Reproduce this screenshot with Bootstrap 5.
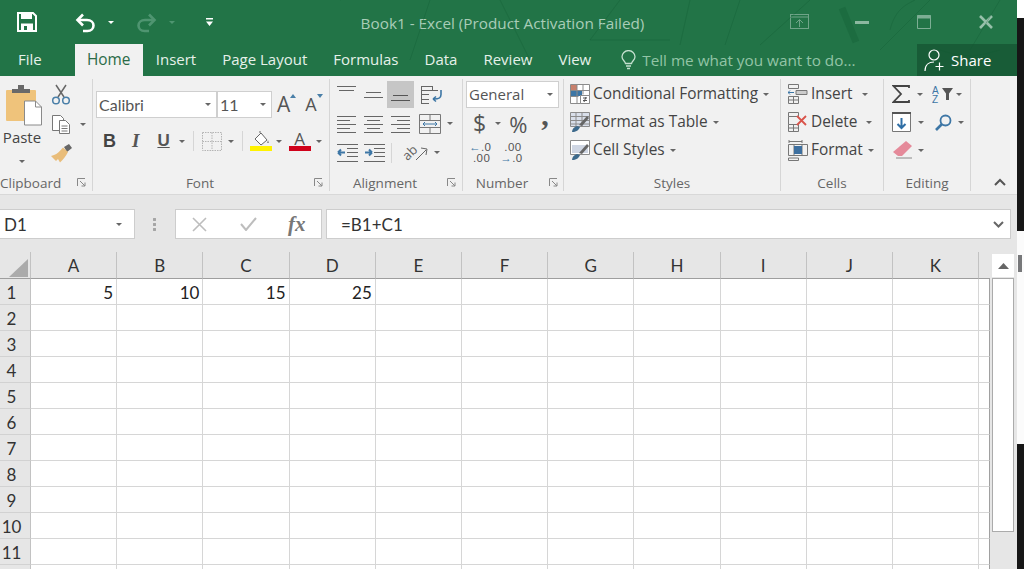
<!DOCTYPE html>
<html lang="en">
<head>
<meta charset="utf-8">
<title>Book1 - Excel</title>
<link href="https://cdn.jsdelivr.net/npm/bootstrap@5.3.0/dist/css/bootstrap.min.css" rel="stylesheet">
<style>
html,body{height:569px;overflow:hidden;margin:0;background:#161616}
body{font-family:"Open Sans","Noto Sans",sans-serif}
.xl-win{width:1017px;height:569px;background:#e6e6e6;overflow:hidden;position:relative;flex:none}
.xl-edge{width:7px;height:569px;background:#161616;flex:none}
.xl-edge-w1{height:18px;background:#fff}
.xl-edge-b1{height:213px}
.xl-edge-w2{height:213px;background:#fbfbfb;padding-top:24px}
.xl-spot{width:4px;height:17px;margin-left:1px;background:#77787a}
.xl-title{height:44px;background:#227447;color:#a9cdb8;font-size:15.3px}
.xl-tabs{height:32px;background:#227447;color:#fff;font-size:15px}
.xl-pattern{position:absolute;left:340px;top:0;pointer-events:none}
.xl-qat{width:215px;padding-left:17px}
.xl-ttl{flex:1;text-align:center;position:relative;top:1px}
.xl-ctl{width:227px}
.xl-tab{padding:0 13px;height:32px;line-height:31px;white-space:nowrap;color:#e6f1ea}
.xl-tab-file{margin-left:5px;margin-right:20px}
.xl-tab-on{background:#f1f1f1;color:#2b6b47;width:68px;padding:0;text-align:center;font-size:15.4px}
.xl-tell{color:#93c4a6;margin-left:17px;flex:1;white-space:nowrap;font-size:15.3px}
.xl-share{width:100px;height:32px;background:#185c37;color:#fff;padding-left:7px;flex:none}
.xl-ribbon{height:119px;background:#f1f1f1;border-bottom:1px solid #d8d8d8;padding-top:3px;color:#444;font-size:15.4px}
.xl-grp{height:112px;border-right:1px solid #d6d6d6;flex:none}
.xl-body{height:95px;flex:none}
.xl-pt1{padding-top:1px}
.xl-lab{height:17px;line-height:19px;font-size:13.5px;color:#666;text-align:center;position:relative}
.xl-lab-l{padding-right:22px}
.xl-launch{position:absolute;right:6px;top:4px}
.xl-launch-n{right:5px}
.w-clip{width:93px}.w-font{width:237px}.w-align{width:133px}.w-num{width:101px}.w-sty{width:217px}.w-cell{width:103px}.w-edit{width:87px}
.xl-paste{width:44px;padding-top:5px;font-size:15px;line-height:20px;text-align:center}
.xl-paste-t{margin-top:1px}
.xl-paste-c{display:block;margin:7px auto 0}
.dn{display:inline-block;width:0;height:0;border-left:3px solid transparent;border-right:3px solid transparent;border-top:3px solid #666;flex:none}
.dn-w{border-top-color:#fff}
.dn-d{border-top-color:#4f9571}
.xl-cr{margin-right:3px}
.xl-combo{background:#fff;border:1px solid #cfcfcf;height:27px;font-size:15.5px;color:#555;padding:0 2px;flex:none}
.xl-cal{font-family:Lato,sans-serif;font-size:16px}
.w121{width:121px}.w55{width:55px}.w93{width:93px}
.xl-gen{font-size:15px;margin:1px 0}
.xl-r28{height:28px}.xl-r29{height:29px}
.xl-hi{background:#c6c6c6;width:27px;height:27px;margin-left:4px}
.xl-sep{width:1px;height:20px;background:#d6d6d6;flex:none}
.ml2{margin-left:2px}.ml3{margin-left:3px}.ml4{margin-left:4px}.ml5{margin-left:5px}.ml6{margin-left:6px}.ml7{margin-left:7px}.ml8{margin-left:8px}.ml9{margin-left:9px}.ml10{margin-left:10px}.ml11{margin-left:11px}.ml12{margin-left:12px}.ml14{margin-left:14px}.ml16{margin-left:16px}.ml18{margin-left:18px}.ml22{margin-left:22px}.ml24{margin-left:24px}.ml31{margin-left:31px}.ml33{margin-left:33px}.ml38{margin-left:38px}.ml45{margin-left:45px}.ml48{margin-left:48px}.mln4{margin-left:-4px}.mln7{margin-left:-7px}
.pl3{padding-left:3px}.pl6{padding-left:6px}.pl7{padding-left:7px}.pl8{padding-left:8px}
.mt12{margin-top:12px}.mt9{margin-top:9px}.mt5{margin-top:5px}.mt1{margin-top:1px}.mtn1{margin-top:-1px}
.xl-txt{white-space:nowrap;margin-left:3px}
.xl-min{width:14px;height:3px;background:#8cb8a0}
.xl-grow{font-size:21px;line-height:21px;color:#555}
.xl-shrink{font-size:18px;line-height:21px;color:#555}
.xl-ab{font-weight:700;font-size:18px;color:#444;font-family:"Liberation Sans",sans-serif;line-height:1}
.xl-it{font:italic 700 19px "Liberation Serif",serif;color:#555}
.xl-un{font-size:17px;line-height:20px;text-decoration:underline;color:#555;font-family:"Liberation Sans",sans-serif;font-weight:700}
.xl-fc{display:flex;flex-direction:column;align-items:center;width:22px;line-height:1}
.xl-fc-a{font-size:17px;line-height:15px;color:#555}
.xl-fc-bar{width:22px;height:5px;background:#d0021b}
.xl-orient{display:inline-block;transform:rotate(-45deg);font-size:13px;line-height:13px;color:#666;width:16px}
.xl-num{font-size:23px;color:#555}
.xl-num>span{line-height:1}
.xl-pc{font-size:22px}
.xl-cm{font:700 30px "Liberation Serif",serif;position:relative;top:-9px}
.xl-dec{font-family:"Liberation Sans",sans-serif;font-size:11.5px;line-height:11px;letter-spacing:.4px;color:#555}
.xl-dec b{color:#3d76a5}
.xl-fbar{height:57px;padding-top:14px;background:#e6e6e6}
.xl-box{height:30px;background:#fff;border:1px solid #cdcdcd;flex:none;font-family:Lato,sans-serif;font-size:17px;color:#333}
.xl-name{width:135px;padding:1px 4px 0;border-left:0}
.xl-fx{width:147px;margin-left:40px;color:#aaa}
.xl-fx-t{font:italic 700 21px "Liberation Serif",serif;color:#777;margin-left:31px;line-height:1}
.xl-input{width:685px;margin-left:4px;padding:1px 6px 0 14px}
.xl-dots{position:absolute;left:153px;top:217px;width:3px;height:15px;background:radial-gradient(circle,#a5a5a5 1.4px,transparent 1.6px) 0 0/3px 5px}
.xl-sheet{border-collapse:separate;border-spacing:0;table-layout:fixed;width:990px;font-family:Lato,sans-serif;font-size:17px;color:#222;flex:none}
.xl-sheet col{width:86.2px}
.xl-sheet col.c-head{width:31px}
.xl-sheet col.c-last{width:10.8px}
.xl-sheet tr{height:26px}
.xl-sheet td{border-right:1px solid #d6d6d6;border-bottom:1px solid #d6d6d6;height:26px;padding:1px 3px 0 0;text-align:right;line-height:1;background:#fff}
.xl-sheet td:last-child{border-right-color:#a0a0a0}
.xl-sheet thead tr{height:27px}
.xl-sheet thead th{height:27px;background:#e6e6e6;font-weight:400;text-align:center;border-right:1px solid #c2c2c2;border-bottom:1px solid #9e9e9e;padding:0;color:#333;line-height:1}
.xl-sheet thead th:last-child{border-right:0}
.xl-sheet tbody th{height:26px;line-height:1;background:#e6e6e6;font-weight:400;text-align:center;border-right:1px solid #c2c2c2;border-bottom:1px solid #d2d2d2;padding:1px 7px 0 0;color:#333}
.xl-tri{margin:6px 0 0 9px}
.xl-scroll{width:27px;flex:none;padding:2px 0 0 2px}
.xl-up{width:22px;height:23px;background:#fff}
.xl-track{width:22px;height:254px;background:#fff;border:1px solid #ababab;margin-top:1px}
.xl-coll{height:112px;padding:0 11px 5px 0}
</style>
</head>
<body class="d-flex">
<div class="xl-win">
  <div class="xl-title d-flex align-items-center">
    <div class="xl-qat d-flex align-items-center">
      <svg width="20" height="20" viewBox="0 0 20 20"><path d="M1 1h15l3 3v15H1z" fill="none" stroke="#fff" stroke-width="2"/><path d="M4 1h11v6H4z" fill="#fff"/><path d="M4 11.500h12V19H4z" fill="#fff"/><path d="M7 14h3v4H7z" fill="#227447"/></svg>
      <svg class="ml38" width="21" height="21" viewBox="0 0 21 21" fill="none" stroke="#fff" stroke-width="2.600"><path d="M8 2.500 2.500 8 8 13.500"/><path d="M3 8h9c4 0 6.500 2.500 6.500 5.500s-2.500 5.500-6 5.500H8"/></svg>
      <span class="dn dn-w ml12"></span>
      <svg class="ml22" width="21" height="21" viewBox="0 0 21 21" fill="none" stroke="#4f9571" stroke-width="2.600"><path d="M13 2.500 18.500 8 13 13.500"/><path d="M18 8H9c-4 0-6.500 2.500-6.500 5.500S5 19 8.500 19H13"/></svg>
      <span class="dn dn-d ml12"></span>
      <svg class="ml31" width="7" height="8" viewBox="0 0 7 8"><path d="M0 0h7v1.500H0zM0 3.500h7L3.500 8z" fill="#fff"/></svg>
    </div>
    <div class="xl-ttl">Book1 - Excel (Product Activation Failed)</div>
    <div class="xl-ctl d-flex align-items-center">
      <svg width="20" height="16" viewBox="0 0 20 16" fill="none" stroke="#6fa488"><rect x=".5" y=".5" width="18" height="14"/><path d="M.5 3h18M9.500 13V6M6 9l3.500-3.500L13 9"/></svg>
      <span class="xl-min ml45"></span>
      <svg class="ml48" width="14" height="14" viewBox="0 0 14 14" fill="none" stroke="#7dae94"><path d="M.5.500h13v13H.5z"/><path d="M0 2h14" stroke-width="3"/></svg>
      <svg class="ml48" width="14" height="14" viewBox="0 0 14 14" fill="none" stroke="#97c0aa" stroke-width="2.600"><path d="M1 1l12 12M13 1 1 13"/></svg>
    </div>
  </div>
  <div class="xl-tabs d-flex">
    <div class="xl-tab xl-tab-file">File</div>
    <div class="xl-tab xl-tab-on">Home</div>
    <div class="xl-tab">Insert</div>
    <div class="xl-tab">Page Layout</div>
    <div class="xl-tab">Formulas</div>
    <div class="xl-tab">Data</div>
    <div class="xl-tab">Review</div>
    <div class="xl-tab">View</div>
    <div class="xl-tell d-flex align-items-center">
      <svg width="15" height="20" viewBox="0 0 15 20" fill="none" stroke="#c4e0cf" stroke-width="1.300"><path d="M4.500 13.500C4 11 1 10 1 6.800a6.500 6.200 0 0 1 13 0c0 3.200-3 4.200-3.500 6.700z"/><path d="M5 16h5M6 18.500h3"/></svg>
      <span class="ml6">Tell me what you want to do...</span>
    </div>
    <div class="xl-share d-flex align-items-center">
      <svg width="22" height="24" viewBox="0 0 22 24" fill="none" stroke="#fff" stroke-width="1.200"><circle cx="10" cy="7" r="5"/><path d="M1 23c0-6 4-9 9-9"/><path d="M15.500 14.500v8M11.500 18.500h8"/></svg>
      <span class="ml5">Share</span>
    </div>
  </div>
  <svg class="xl-pattern" width="677" height="76" viewBox="0 0 677 76" fill="none" stroke="#0f5a33" stroke-opacity=".3"><path d="M-45 60 -20 20M-20 40 0 0M90 0l-20 60M160 0l30 60 -25 10M280 0l-30 40 80 0M350 0l-10 45M400 0l-15 45M470 0l-50 45M590 0 540 50"/><path d="M502 8 516 42" stroke-width="7"/><path d="M660 0l-30 50M550 30c5-20 15-25 25-30M600 50c30 10 40 5 60 0"/></svg>

  <div class="xl-ribbon d-flex">
    <section class="xl-grp w-clip d-flex flex-column">
      <div class="xl-body d-flex">
        <div class="xl-paste">
          <svg class="ms-1 d-block" width="38" height="42" viewBox="0 0 38 42"><rect x="2" y="6" width="30" height="31" rx="1" fill="#efc37b"/><path d="M8 5h6V1h6v4h6v4H8z" fill="#696969"/><path d="M20.500 17h11l6 6v18h-17z" fill="#fff" stroke="#8a8a8a"/><path d="M31.500 17v6h6" fill="none" stroke="#8a8a8a"/></svg>
          <div class="xl-paste-t">Paste</div>
          <span class="dn xl-paste-c"></span>
        </div>
        <div class="ml7">
          <svg class="d-block mt5" width="20" height="21" viewBox="0 0 20 21" fill="none" stroke-width="1.500"><path d="M5 1l8 12M15 1 7 13" stroke="#666"/><circle cx="5" cy="16.500" r="3.300" stroke="#4a7fa8"/><circle cx="15" cy="16.500" r="3.300" stroke="#4a7fa8"/></svg>
          <div class="d-flex align-items-center mt9">
            <svg width="20" height="21" viewBox="0 0 20 21" fill="#fff" stroke="#777"><path d="M1.500 1.500h8l3 3v12h-11z"/><path d="M8.500 6.500h6l4 4v9h-10z"/><path d="M10.500 12h6M10.500 14.500h6M10.500 17h6" fill="none"/></svg>
            <span class="dn ml9"></span>
          </div>
          <svg class="d-block mt9" width="21" height="19" viewBox="0 0 21 19"><path d="M13 3l5-3 3 4-5 4z" fill="#666"/><path d="M12 3.500 17 8c-2 4-5 8-8 10.500L7 15l-2 2-5-5 3-1c3-1 6-4 9-7.500z" fill="#e9bd7a"/></svg>
        </div>
      </div>
      <div class="xl-lab text-start">Clipboard<svg class="xl-launch" width="9" height="9" viewBox="0 0 9 9" fill="none" stroke="#888"><path d="M.5 8V.5H8M3 3l5 5M8 4.500V8H4.500"/></svg></div>
    </section>

    <section class="xl-grp w-font d-flex flex-column">
      <div class="xl-body pl3">
        <div class="d-flex align-items-center mt12">
          <div class="xl-combo xl-cal w121 d-flex align-items-center justify-content-between"><span>Calibri</span><span class="dn xl-cr"></span></div>
          <div class="xl-combo xl-cal w55 d-flex align-items-center justify-content-between"><span>11</span><span class="dn xl-cr"></span></div>
          <div class="d-flex align-items-start ml5"><span class="xl-grow">A</span><svg width="6" height="4" viewBox="0 0 6 4"><path d="M3 0l3 4H0z" fill="#4a7fa8"/></svg></div>
          <div class="d-flex align-items-start ml9"><span class="xl-shrink">A</span><svg width="6" height="4" viewBox="0 0 6 4"><path d="M3 4l3-4H0z" fill="#4a7fa8"/></svg></div>
        </div>
        <div class="d-flex align-items-center mt9 xl-r28">
          <span class="xl-ab ml7">B</span>
          <span class="xl-it ml16">I</span>
          <span class="xl-un ml18">U</span>
          <span class="dn ml9"></span>
          <span class="xl-sep ml8"></span>
          <svg class="ml8" width="20" height="19" viewBox="0 0 20 19" fill="none" stroke="#b5b5b5" stroke-dasharray="1.500 1"><path d="M.5.500h19v18H.5zM10 .5v18M.5 9.500h19"/></svg>
          <span class="dn ml6"></span>
          <span class="xl-sep ml8"></span>
          <svg class="ml6" width="24" height="21" viewBox="0 0 24 21"><path d="M6 8l6-6 6 7-6 5z" fill="#fff" stroke="#666"/><path d="M11 2V0" stroke="#666"/><path d="M19 9l1 3h-2z" fill="#888"/><path d="M1 15h22v5H1z" fill="#fff200"/></svg>
          <span class="dn ml3"></span>
          <div class="xl-fc ml7"><span class="xl-fc-a">A</span><span class="xl-fc-bar"></span></div>
          <span class="dn ml5"></span>
        </div>
      </div>
      <div class="xl-lab xl-lab-l">Font<svg class="xl-launch" width="9" height="9" viewBox="0 0 9 9" fill="none" stroke="#888"><path d="M.5 8V.5H8M3 3l5 5M8 4.500V8H4.500"/></svg></div>
    </section>

    <section class="xl-grp w-align d-flex flex-column">
      <div class="xl-body pl7 mt1">
        <div class="d-flex align-items-center xl-r29">
          <svg class="align-self-start mt5" width="19" height="12" viewBox="0 0 19 12" stroke="#666"><path d="M0 1.500h19M2 5.500h15"/></svg>
          <svg class="ml8" width="19" height="12" viewBox="0 0 19 12" stroke="#666"><path d="M2 3.500h15M0 8.500h19"/></svg>
          <div class="xl-hi d-flex align-items-end justify-content-center pb-1"><svg width="19" height="12" viewBox="0 0 19 12" stroke="#555"><path d="M2 3.500h15M0 8.500h19"/></svg></div>
          <svg class="ml6" width="24" height="20" viewBox="0 0 24 20" fill="none" stroke="#666"><path d="M1 1.500h11M1 5.500h17M1 9.500h8M1 14.500h8M1 18.500h8M1.500 1v18M12.500 1v4"/><path d="M14 14c5 0 7-1 7-4.500M13 14l3-2.500M13 14l3 2.500M21 9.500V5" stroke="#3d76a5" stroke-width="1.600"/></svg>
        </div>
        <div class="d-flex align-items-center xl-r29">
          <svg width="19" height="18" viewBox="0 0 19 18" stroke="#666"><path d="M0 1.500h19M0 5.500h13M0 9.500h19M0 13.500h13M0 17.500h19"/></svg>
          <svg class="ml8" width="19" height="18" viewBox="0 0 19 18" stroke="#666"><path d="M0 1.500h19M3 5.500h13M0 9.500h19M3 13.500h13M0 17.500h19"/></svg>
          <svg class="ml8" width="19" height="18" viewBox="0 0 19 18" stroke="#666"><path d="M0 1.500h19M6 5.500h13M0 9.500h19M6 13.500h13M0 17.500h19"/></svg>
          <svg class="ml9" width="22" height="20" viewBox="0 0 22 20" fill="none" stroke="#777"><path d="M.5.500h21v19H.5zM.5 6.500h21M.5 13.500h21M11 .5v6M11 13.500v6"/><path d="M4 10h14M4 10l2-2M4 10l2 2M18 10l-2-2M18 10l-2 2" stroke="#3d76a5"/></svg>
          <span class="dn ml6"></span>
        </div>
        <div class="d-flex align-items-center xl-r29">
          <svg width="21" height="19" viewBox="0 0 21 19" fill="none" stroke="#666"><path d="M0 1.500h21M10 5.500h11M10 9.500h11M10 13.500h11M0 18.500h21"/><path d="M1 9.500h7M1 9.500l3-3M1 9.500l3 3" stroke="#3d76a5" stroke-width="2"/></svg>
          <svg class="ml6" width="21" height="19" viewBox="0 0 21 19" fill="none" stroke="#666"><path d="M0 1.500h21M10 5.500h11M10 9.500h11M10 13.500h11M0 18.500h21"/><path d="M1 9.500h7M8 9.500 5 6.500M8 9.500l-3 3" stroke="#3d76a5" stroke-width="2"/></svg>
          <span class="xl-sep ml6"></span>
          <span class="xl-orient ml10">ab</span>
          <svg width="16" height="20" class="mln4" viewBox="0 0 16 20"><path d="M2 17l10-10M7 5l6 1-1 6" fill="none" stroke="#666"/></svg>
          <span class="dn ml4"></span>
        </div>
      </div>
      <div class="xl-lab xl-lab-l mtn1">Alignment<svg class="xl-launch" width="9" height="9" viewBox="0 0 9 9" fill="none" stroke="#888"><path d="M.5 8V.5H8M3 3l5 5M8 4.500V8H4.500"/></svg></div>
    </section>

    <section class="xl-grp w-num d-flex flex-column">
      <div class="xl-body pl3 mt1">
        <div class="xl-combo xl-gen w93 d-flex align-items-center justify-content-between"><span>General</span><span class="dn xl-cr"></span></div>
        <div class="d-flex align-items-center xl-r29 xl-num">
          <span class="ml7">$</span>
          <span class="dn ml9"></span>
          <span class="xl-pc ml8">%</span>
          <span class="xl-cm ml14">,</span>
        </div>
        <div class="d-flex align-items-center xl-r29 xl-dec">
          <span class="ml3"><b>←</b>.0<br><span class="ps-1">.00</span></span>
          <span class="ml9"><span class="ps-1">.00</span><br><b>→</b>.0</span>
        </div>
      </div>
      <div class="xl-lab xl-lab-l mtn1">Number<svg class="xl-launch xl-launch-n" width="9" height="9" viewBox="0 0 9 9" fill="none" stroke="#888"><path d="M.5 8V.5H8M3 3l5 5M8 4.500V8H4.500"/></svg></div>
    </section>

    <section class="xl-grp w-sty d-flex flex-column">
      <div class="xl-body pl6 xl-pt1">
        <div class="d-flex align-items-center xl-r28">
          <svg width="20" height="20" viewBox="0 0 20 20" fill="#fff" stroke="#8b8b8b"><path d="M.5.500h19v19H.5z"/><path d="M1 1h6v5H1z" fill="#c8806c" stroke="none"/><path d="M1 7h11v5H1z" fill="#3d76a5" stroke="none"/><path d="M7 .5v19M13 .5v10M.5 6.500h19M.5 12.500h8"/><path d="M10.500 11.500h9v8h-9z"/><path d="M13 14h4M13 16.500h4M16 13l-2 5" fill="none" stroke="#555"/></svg>
          <span class="xl-txt">Conditional Formatting</span><span class="dn ml5"></span>
        </div>
        <div class="d-flex align-items-center xl-r28">
          <svg width="20" height="20" viewBox="0 0 20 20" fill="none" stroke="#8b8b8b"><path d="M.5.500h19v14H.5z" fill="#d9dfea"/><path d="M.5 4.500h19M.5 8.500h19M.5 12h19M6 .5v14M12 .5v14"/><path d="M19 6 12 14l-3-1 8-9z" fill="#666" stroke="none"/><path d="M2 20c0-3 2-5 5-6l3 1c-1 3-4 5-8 5z" fill="#3d6a8c" stroke="none"/></svg>
          <span class="xl-txt">Format as Table</span><span class="dn ml5"></span>
        </div>
        <div class="d-flex align-items-center xl-r28">
          <svg width="20" height="20" viewBox="0 0 20 20" fill="none" stroke="#8b8b8b"><path d="M.5.500h19v14H.5z" fill="#fff"/><path d="M2 5h16v8H2z" fill="#cfd6e3" stroke="none"/><path d="M19 6 12 14l-3-1 8-9z" fill="#666" stroke="none"/><path d="M2 20c0-3 2-5 5-6l3 1c-1 3-4 5-8 5z" fill="#3d6a8c" stroke="none"/></svg>
          <span class="xl-txt">Cell Styles</span><span class="dn ml5"></span>
        </div>
      </div>
      <div class="xl-lab">Styles</div>
    </section>

    <section class="xl-grp w-cell d-flex flex-column">
      <div class="xl-body pl7 xl-pt1">
        <div class="d-flex align-items-center xl-r28">
          <svg width="20" height="20" viewBox="0 0 20 20" fill="none" stroke="#777"><path d="M.5.500h10v4H.5zM.5 12.500h10v7H.5zM5.500 12.500v7M.5 16h10"/><path d="M8 6.500h11v4H8z" fill="#ccc"/><path d="M0 8.500h6M0 8.500l2-2M0 8.500l2 2" stroke="#3d76a5"/></svg>
          <span class="xl-txt">Insert</span><span class="dn ml9"></span>
        </div>
        <div class="d-flex align-items-center xl-r28">
          <svg width="20" height="20" viewBox="0 0 20 20" fill="none" stroke="#777"><path d="M.5.500h10v4H.5zM.5 12.500h10v7H.5zM5.500 12.500v7M.5 16h10M.5 4.500v8"/><path d="M9 4l9 9M18 4l-9 9" stroke="#d9534a" stroke-width="1.800"/></svg>
          <span class="xl-txt">Delete</span><span class="dn ml9"></span>
        </div>
        <div class="d-flex align-items-center xl-r28">
          <svg width="20" height="22" viewBox="0 0 20 22" fill="none" stroke="#777"><path d="M1 1v3M14 1v3M1 2.500h13"/><path d="M.5 5.500h19v11H.5zM6 5.500v11M14 5.500v11M.5 19h10v2.500H.5z"/><path d="M6 7h8v8H6z" fill="#3d6f9f" stroke="none"/></svg>
          <span class="xl-txt">Format</span><span class="dn ml5"></span>
        </div>
      </div>
      <div class="xl-lab">Cells</div>
    </section>

    <section class="xl-grp w-edit d-flex flex-column">
      <div class="xl-body pl8 xl-pt1">
        <div class="d-flex align-items-center xl-r28">
          <svg width="18" height="18" viewBox="0 0 18 18" fill="none" stroke="#444" stroke-width="1.800"><path d="M17 3V1H1.500L9 9 1.500 17H17v-2"/></svg>
          <span class="dn ml7"></span>
          <svg class="ml9" width="14" height="19" viewBox="0 0 14 19"><text x="0" y="9" font-family="Liberation Sans,sans-serif" font-size="10" fill="#3d76a5">A</text><text x="0" y="18" font-family="Liberation Sans,sans-serif" font-size="10" fill="#3d76a5">Z</text></svg>
          <svg class="mln4" width="11" height="12" viewBox="0 0 11 12"><path d="M0 0h11L7 5.500V12H4V5.500z" fill="#555"/></svg>
          <span class="dn ml3"></span>
        </div>
        <div class="d-flex align-items-center xl-r28">
          <svg width="20" height="20" viewBox="0 0 20 20" fill="#fff" stroke="#777"><path d="M.5 1.500h18v18H.5z"/><path d="M0 1h19" stroke="#555" stroke-width="2"/><path d="M9.500 6v10M5.500 12l4 4 4-4" fill="none" stroke="#2f6ea5" stroke-width="2"/></svg>
          <span class="dn ml6"></span>
          <svg class="ml11" width="17" height="17" viewBox="0 0 17 17" fill="none" stroke="#3d76a5" stroke-width="1.800"><circle cx="10.500" cy="6.500" r="5"/><path d="M7 10l-6 6" stroke-width="2.600"/></svg>
          <span class="dn ml6"></span>
        </div>
        <div class="d-flex align-items-center xl-r28">
          <svg width="20" height="18" viewBox="0 0 20 18"><path d="M14 0l6 5-10 10H6L1 11z" fill="#e58a9a"/><path d="M4 17h16" stroke="#888"/></svg>
          <span class="dn ml6"></span>
        </div>
      </div>
      <div class="xl-lab">Editing</div>
    </section>
    <div class="flex-grow-1 d-flex align-items-end justify-content-end xl-coll">
      <svg width="12" height="8" viewBox="0 0 12 8" fill="none" stroke="#555" stroke-width="2"><path d="M1 7l5-5 5 5"/></svg>
    </div>
  </div>

  <div class="xl-fbar d-flex">
    <div class="xl-box xl-name d-flex align-items-center justify-content-between"><span>D1</span><span class="dn me-2"></span></div>
    <div class="xl-box xl-fx d-flex align-items-center">
      <svg class="ml16" width="15" height="15" viewBox="0 0 15 15" stroke="#bdbdbd" stroke-width="1.600"><path d="M1 1l13 13M14 1 1 14"/></svg>
      <svg class="ml33" width="17" height="14" viewBox="0 0 17 14" fill="none" stroke="#bdbdbd" stroke-width="2"><path d="M1 7l5 6L16 1"/></svg>
      <span class="xl-fx-t">fx</span>
    </div>
    <div class="xl-box xl-input d-flex align-items-center justify-content-between"><span>=B1+C1</span><svg width="11" height="7" viewBox="0 0 11 7" fill="none" stroke="#666" stroke-width="2"><path d="M1 1l4.500 4.500L10 1"/></svg></div>
  </div>
  <div class="xl-dots"></div>

  <div class="d-flex">
    <table class="xl-sheet">
      <colgroup><col class="c-head"><col><col><col><col><col><col><col><col><col><col><col><col class="c-last"></colgroup>
      <thead><tr><th><svg class="d-block xl-tri" width="19" height="18" viewBox="0 0 19 18"><path d="M19 0v18H0z" fill="#ababab"/></svg></th><th>A</th><th>B</th><th>C</th><th>D</th><th>E</th><th>F</th><th>G</th><th>H</th><th>I</th><th>J</th><th>K</th><th></th></tr></thead>
      <tbody>
        <tr><th>1</th><td>5</td><td>10</td><td>15</td><td>25</td><td></td><td></td><td></td><td></td><td></td><td></td><td></td><td></td></tr>
        <tr><th>2</th><td></td><td></td><td></td><td></td><td></td><td></td><td></td><td></td><td></td><td></td><td></td><td></td></tr>
        <tr><th>3</th><td></td><td></td><td></td><td></td><td></td><td></td><td></td><td></td><td></td><td></td><td></td><td></td></tr>
        <tr><th>4</th><td></td><td></td><td></td><td></td><td></td><td></td><td></td><td></td><td></td><td></td><td></td><td></td></tr>
        <tr><th>5</th><td></td><td></td><td></td><td></td><td></td><td></td><td></td><td></td><td></td><td></td><td></td><td></td></tr>
        <tr><th>6</th><td></td><td></td><td></td><td></td><td></td><td></td><td></td><td></td><td></td><td></td><td></td><td></td></tr>
        <tr><th>7</th><td></td><td></td><td></td><td></td><td></td><td></td><td></td><td></td><td></td><td></td><td></td><td></td></tr>
        <tr><th>8</th><td></td><td></td><td></td><td></td><td></td><td></td><td></td><td></td><td></td><td></td><td></td><td></td></tr>
        <tr><th>9</th><td></td><td></td><td></td><td></td><td></td><td></td><td></td><td></td><td></td><td></td><td></td><td></td></tr>
        <tr><th>10</th><td></td><td></td><td></td><td></td><td></td><td></td><td></td><td></td><td></td><td></td><td></td><td></td></tr>
        <tr><th>11</th><td></td><td></td><td></td><td></td><td></td><td></td><td></td><td></td><td></td><td></td><td></td><td></td></tr>
        <tr><th></th><td></td><td></td><td></td><td></td><td></td><td></td><td></td><td></td><td></td><td></td><td></td><td></td></tr>
      </tbody>
    </table>
    <div class="xl-scroll">
      <div class="xl-up d-flex align-items-center justify-content-center"><svg width="11" height="6" viewBox="0 0 11 6"><path d="M5.500 0 11 6H0z" fill="#666"/></svg></div>
      <div class="xl-track"></div>
    </div>
  </div>
</div>
<div class="xl-edge">
  <div class="xl-edge-w1"></div>
  <div class="xl-edge-b1"></div>
  <div class="xl-edge-w2"><div class="xl-spot"></div></div>
</div>
</body>
</html>
